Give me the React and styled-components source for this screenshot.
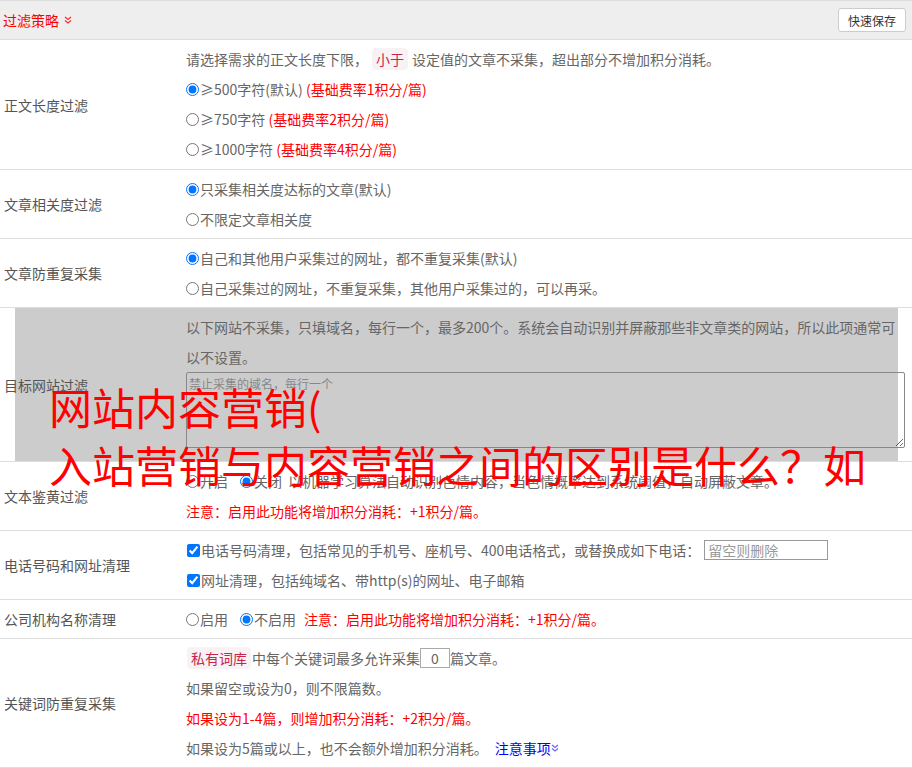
import React from "react";
import styled, { createGlobalStyle } from "styled-components";

const GlobalStyle = createGlobalStyle`
  html, body {
    margin: 0;
    padding: 0;
    background: #fff;
  }
  body {
    font-family: "Noto Sans CJK SC", "Liberation Sans", sans-serif;
    font-size: 14px;
    color: #666;
  }
`;

const Page = styled.div`
  position: relative;
  width: 912px;
  overflow: hidden;
`;

const Header = styled.div`
  display: flex;
  align-items: center;
  justify-content: space-between;
  height: 38px;
  padding: 0 6px 0 3px;
  background: #eeeeee;
  border-top: 1px solid #dddddd;
  border-bottom: 1px solid #dddddd;
`;

const HeaderTitle = styled.div`
  display: flex;
  align-items: center;
  gap: 5px;
  color: #ff0000;
  font-size: 14px;
`;

const SaveButton = styled.button`
  height: 24px;
  padding: 0 9px;
  font-family: inherit;
  font-size: 12px;
  color: #333;
  background: #fff;
  border: 1px solid #cccccc;
  border-radius: 3px;
`;

const Row = styled.div`
  position: relative;
  display: grid;
  grid-template-columns: 186px 1fr;
  border-bottom: 1px solid #dddddd;
`;

const Label = styled.div`
  position: relative;
  z-index: 1;
  display: flex;
  align-items: center;
  padding-left: 4px;
  color: #555;
`;

const Content = styled.div`
  position: relative;
  z-index: 1;
  padding: 4px 7px ${(p) => p.$pb || 4}px 0;
  line-height: 30px;
`;

const Line = styled.div`
  display: flex;
  align-items: center;
  height: 30px;
  color: ${(p) => (p.$red ? "#ff0000" : "inherit")};
  white-space: nowrap;
`;

const WrapLine = styled.div`
  white-space: normal;
`;

const Option = styled.label`
  display: inline-flex;
  align-items: center;
  margin-right: ${(p) => p.$gap || 0}px;
`;

const Radio = styled.input.attrs({ type: "radio" })`
  width: 13px;
  height: 13px;
  margin: 0 1px 0 0;
`;

const Check = styled.input.attrs({ type: "checkbox" })`
  width: 13px;
  height: 13px;
  margin: 0 1px 0 1px;
`;

const Red = styled.span`
  color: #ff0000;
`;

const Tag = styled.span`
  display: inline-block;
  padding: 0 4px;
  margin: 0 ${(p) => p.$mr || 4}px 0 ${(p) => p.$ml || 0}px;
  line-height: 22px;
  color: #c7254e;
  background: #f9f2f4;
  border-radius: 4px;
`;

const Mask = styled.div`
  position: absolute;
  z-index: 0;
  top: 0;
  bottom: 0;
  left: 15px;
  right: 14px;
  background: #cccccc;
`;

const Domains = styled.textarea`
  display: block;
  box-sizing: border-box;
  width: 719px;
  height: 76px;
  margin: 0 0 9px;
  padding: 1px 2px;
  font-family: inherit;
  font-size: 12px;
  line-height: 20px;
  color: #666;
  background: transparent;
  border: 1px solid #888;
  border-radius: 2px;
  resize: both;

  &::placeholder {
    color: #888;
  }
`;

const PhoneInput = styled.input`
  box-sizing: border-box;
  width: 124px;
  height: 20px;
  margin-left: 4px;
  padding: 0 3px;
  font-family: inherit;
  font-size: 14px;
  border: 1px solid #999;

  &::placeholder {
    color: #999;
  }
`;

const CountInput = styled.input`
  box-sizing: border-box;
  width: 30px;
  height: 20px;
  padding: 0;
  font-family: inherit;
  font-size: 14px;
  text-align: center;
  color: #666;
  border: 1px solid #aaa;
`;

const Link = styled.a`
  display: inline-flex;
  align-items: center;
  margin-left: 7px;
  color: #0000ff;
  text-decoration: none;
`;

const Banner = styled.div`
  position: absolute;
  z-index: 5;
  top: 377px;
  left: 49px;
  font-size: 43px;
  line-height: 58px;
  color: #ff0000;
  white-space: nowrap;
  pointer-events: none;
`;

const Chevrons = ({ color }) => (
  <svg width="8" height="8" viewBox="0 0 8 8" fill="none" stroke={color} strokeWidth="1.3">
    <polyline points="1,1 4,3.5 7,1" />
    <polyline points="1,4.5 4,7 7,4.5" />
  </svg>
);

export default function App() {
  return (
    <Page>
      <GlobalStyle />
      <Header>
        <HeaderTitle>
          过滤策略
          <Chevrons color="#ff3030" />
        </HeaderTitle>
        <SaveButton>快速保存</SaveButton>
      </Header>

      <Row>
        <Label>正文长度过滤</Label>
        <Content $pb={5}>
          <Line>
            请选择需求的正文长度下限，<Tag $ml={4}>小于</Tag>设定值的文章不采集，超出部分不增加积分消耗。
          </Line>
          <Line>
            <Option>
              <Radio name="len" defaultChecked />≥500字符(默认)&nbsp;<Red>(基础费率1积分/篇)</Red>
            </Option>
          </Line>
          <Line>
            <Option>
              <Radio name="len" />≥750字符&nbsp;<Red>(基础费率2积分/篇)</Red>
            </Option>
          </Line>
          <Line>
            <Option>
              <Radio name="len" />≥1000字符&nbsp;<Red>(基础费率4积分/篇)</Red>
            </Option>
          </Line>
        </Content>
      </Row>

      <Row>
        <Label>文章相关度过滤</Label>
        <Content>
          <Line>
            <Option>
              <Radio name="rel" defaultChecked />只采集相关度达标的文章(默认)
            </Option>
          </Line>
          <Line>
            <Option>
              <Radio name="rel" />不限定文章相关度
            </Option>
          </Line>
        </Content>
      </Row>

      <Row>
        <Label>文章防重复采集</Label>
        <Content>
          <Line>
            <Option>
              <Radio name="dup" defaultChecked />自己和其他用户采集过的网址，都不重复采集(默认)
            </Option>
          </Line>
          <Line>
            <Option>
              <Radio name="dup" />自己采集过的网址，不重复采集，其他用户采集过的，可以再采。
            </Option>
          </Line>
        </Content>
      </Row>

      <Row>
        <Mask />
        <Label>目标网站过滤</Label>
        <Content>
          <WrapLine>
            以下网站不采集，只填域名，每行一个，最多200个。系统会自动识别并屏蔽那些非文章类的网站，所以此项通常可以不设置。
          </WrapLine>
          <Domains placeholder="禁止采集的域名，每行一个" />
        </Content>
      </Row>

      <Row>
        <Label>文本鉴黄过滤</Label>
        <Content>
          <Line>
            <Option $gap={12}>
              <Radio name="porn" />开启
            </Option>
            <Option $gap={6}>
              <Radio name="porn" defaultChecked />关闭
            </Option>
            以机器学习算法自动识别色情内容，当色情概率达到系统阈值，自动屏蔽文章。
          </Line>
          <Line $red>注意：启用此功能将增加积分消耗：+1积分/篇。</Line>
        </Content>
      </Row>

      <Row>
        <Label>电话号码和网址清理</Label>
        <Content>
          <Line>
            <Option>
              <Check defaultChecked />电话号码清理，包括常见的手机号、座机号、400电话格式，或替换成如下电话：
            </Option>
            <PhoneInput placeholder="留空则删除" />
          </Line>
          <Line>
            <Option>
              <Check defaultChecked />网址清理，包括纯域名、带http(s)的网址、电子邮箱
            </Option>
          </Line>
        </Content>
      </Row>

      <Row>
        <Label>公司机构名称清理</Label>
        <Content>
          <Line>
            <Option $gap={12}>
              <Radio name="org" />启用
            </Option>
            <Option $gap={8}>
              <Radio name="org" defaultChecked />不启用
            </Option>
            <Red>注意：启用此功能将增加积分消耗：+1积分/篇。</Red>
          </Line>
        </Content>
      </Row>

      <Row>
        <Label>关键词防重复采集</Label>
        <Content>
          <Line>
            <Tag $ml={1} $mr={1}>私有词库</Tag>中每个关键词最多允许采集<CountInput defaultValue="0" />篇文章。
          </Line>
          <Line>如果留空或设为0，则不限篇数。</Line>
          <Line $red>如果设为1-4篇，则增加积分消耗：+2积分/篇。</Line>
          <Line>
            如果设为5篇或以上，也不会额外增加积分消耗。
            <Link href="#">
              注意事项
              <Chevrons color="#6a6aff" />
            </Link>
          </Line>
        </Content>
      </Row>

      <Banner>
        网站内容营销(
        <br />
        入站营销与内容营销之间的区别是什么？如
      </Banner>
    </Page>
  );
}
